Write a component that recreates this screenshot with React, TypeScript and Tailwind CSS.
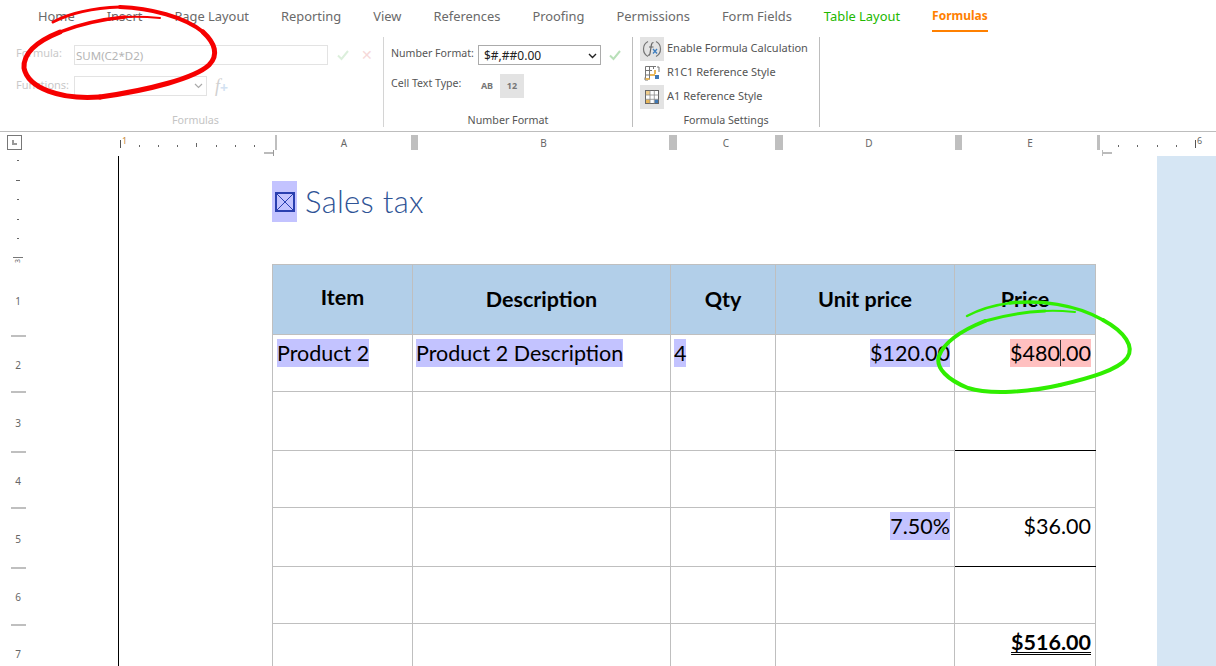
const tabs = ['Home', 'Insert', 'Page Layout', 'Reporting', 'View', 'References', 'Proofing', 'Permissions', 'Form Fields'];

function Mark({ children, red }: { children: React.ReactNode; red?: boolean }) {
  return <span className={`inline-block h-[28px] leading-[28px] ${red ? 'bg-[#ffc0c0]' : 'bg-[#c3c3ff]'}`}>{children}</span>;
}

function Check({ className }: { className: string }) {
  return (
    <svg width="12" height="12" viewBox="0 0 12 12" className={className}>
      <path d="M1 6.5 L4.5 10 L11 2" fill="none" stroke="currentColor" strokeWidth="2" />
    </svg>
  );
}

function FormulaIcon() {
  return (
    <svg width="22" height="22" viewBox="0 0 22 22">
      <path d="M7 3.5 A8.5 8.5 0 0 0 7 18.5 M15 3.5 A8.5 8.5 0 0 1 15 18.5" fill="none" stroke="#777" strokeWidth="1.2" />
      <path d="M12.5 4.5 C10.5 4.5 10.5 6 10.2 8 L9 15.5 C8.8 17 8 17.5 7 17" fill="none" stroke="#666" strokeWidth="1.2" />
      <path d="M8 9 H12.5" stroke="#666" strokeWidth="1" />
      <path d="M12 11 L16 15.5 M16 11 L12 15.5" stroke="#3f7fc0" strokeWidth="1.3" />
    </svg>
  );
}

function R1C1Icon() {
  return (
    <svg width="16" height="16" viewBox="0 0 16 16">
      <path d="M1.5 1.5 H12 M1.5 1.5 V14.5 M1.5 5.5 H8 M1.5 10 H5.5 M5.5 1.5 V14.5 M9.5 1.5 V4" fill="none" stroke="#777" />
      <path d="M13 2 H15 V7 M2 12.5 H1 V15 H4" fill="none" stroke="#777" />
      <rect x="6" y="9" width="5" height="2" fill="#e8b75a" />
      <rect x="10" y="5" width="2" height="4" fill="#e8b75a" />
      <rect x="11" y="10" width="4" height="4" fill="#3f78b5" />
      <rect x="1.5" y="13" width="4" height="2" fill="#e8b75a" />
    </svg>
  );
}

function A1Icon() {
  return (
    <svg width="14" height="14" viewBox="0 0 14 14">
      <rect x="0.5" y="0.5" width="13" height="13" fill="#fff" stroke="#666" />
      <rect x="1" y="1" width="4" height="4" fill="#f0cd8c" />
      <rect x="1" y="9.5" width="4" height="3.5" fill="#e8b75a" />
      <rect x="9.5" y="9.5" width="3.5" height="3.5" fill="#3f78b5" />
      <path d="M5 0.5 V13.5 M9.3 0.5 V13.5 M0.5 5 H13.5 M0.5 9.3 H13.5" stroke="#8a8a8a" strokeWidth="0.8" />
    </svg>
  );
}

function Ribbon() {
  return (
    <div className="h-[100px] flex pt-[5px] border-b border-[#bdbdbd] text-[11px] text-[#555]">
      <div className="w-[375px] ml-[9px] h-[90px] flex flex-col border-r border-[#d4d4d4] shrink-0">
        <div className="flex items-center h-[20px] mt-[8px] pl-[7px] text-[#c9c9c9]">
          <span className="w-[58px] pb-[3px]">Formula:</span>
          <div className="w-[254px] h-[20px] border border-[#e3e3e3] pl-[1px] pt-[1px] text-[11.5px] leading-[18px] text-[#b5b5b5]">SUM(C2*D2)</div>
          <Check className="ml-[9px] text-[#dcefdc]" />
          <span className="ml-[12px] text-[#f6d9d9] text-[14px] leading-none">✕</span>
        </div>
        <div className="flex items-center h-[20px] mt-[11px] pl-[7px] text-[#c9c9c9]">
          <span className="w-[58px] pb-[2px]">Functions:</span>
          <div className="w-[133px] h-[20px] border border-[#e3e3e3] flex items-center justify-end pr-[3px]">
            <svg width="9" height="6" viewBox="0 0 9 6"><path d="M1 1 L4.5 4.5 L8 1" fill="none" stroke="#aaa" strokeWidth="1.2" /></svg>
          </div>
          <span className="ml-[8px] font-['Liberation_Serif',serif] italic text-[18px] text-[#d0d0d0] leading-none">f</span>
          <span className="text-[#d3e2f2] text-[14px] leading-none font-bold mt-[3px]">+</span>
        </div>
        <div className="mt-auto -mb-[1px] text-center text-[#c4c4c4] text-[10.7px] pr-[1px]">Formulas</div>
      </div>

      <div className="w-[249px] h-[90px] flex flex-col border-r border-[#bdbdbd] pl-[7px] shrink-0">
        <div className="flex items-center h-[20px] mt-[8px]">
          <span className="w-[87px] pb-[2px] text-[10.6px] whitespace-nowrap">Number Format:</span>
          <div className="w-[123px] h-[20px] border border-[#ababab] flex items-center justify-between pl-[5px] pr-[3px] pt-[1px] text-[12px] text-[#222]">
            $#,##0.00
            <svg width="9" height="6" viewBox="0 0 9 6"><path d="M1 1 L4.5 4.5 L8 1" fill="none" stroke="#222" strokeWidth="1.4" /></svg>
          </div>
          <Check className="ml-[8px] text-[#b9e0b9]" />
        </div>
        <div className="flex items-center h-[24px] mt-[9px]">
          <span className="w-[83px] pb-[4px] text-[10.6px]">Cell Text Type:</span>
          <span className="w-[26px] text-center text-[9px] font-bold text-[#777]">AB</span>
          <span className="w-[24px] h-[24px] bg-[#e3e3e3] flex items-center justify-center text-[9px] font-bold text-[#777]">12</span>
        </div>
        <div className="mt-auto -mb-[1px] text-center text-[10.7px] pr-[7px]">Number Format</div>
      </div>

      <div className="w-[187px] h-[90px] flex flex-col border-r border-[#bdbdbd] pl-[7px] shrink-0">
        <div className="flex items-center h-[24px]">
          <span className="w-[24px] h-[24px] bg-[#e3e3e3] flex items-center justify-center"><FormulaIcon /></span>
          <span className="ml-[3px] pb-[2px] whitespace-nowrap">Enable Formula Calculation</span>
        </div>
        <div className="flex items-center h-[24px]">
          <span className="w-[24px] h-[24px] flex items-center justify-center"><R1C1Icon /></span>
          <span className="ml-[3px] pb-[2px] whitespace-nowrap">R1C1 Reference Style</span>
        </div>
        <div className="flex items-center h-[24px]">
          <span className="w-[24px] h-[24px] bg-[#e3e3e3] flex items-center justify-center"><A1Icon /></span>
          <span className="ml-[3px] pb-[2px] whitespace-nowrap">A1 Reference Style</span>
        </div>
        <div className="mt-auto -mb-[1px] text-center text-[10.7px] pr-[7px]">Formula Settings</div>
      </div>
    </div>
  );
}

function Ticks({ width, n, tall }: { width: number; n: number; tall: number }) {
  return (
    <div className="flex justify-between items-end h-[5px] mt-[7px]" style={{ width }}>
      {Array.from({ length: n }).map((_, i) => (
        <span key={i} className={`w-[1px] bg-[#666] ${i === tall ? 'h-[4px]' : 'h-[2px]'}`} />
      ))}
    </div>
  );
}

function Handle({ w }: { w: string }) {
  return <div className={`${w} h-[15px] bg-[#bfbfbf] shrink-0`} />;
}

function RulerTop() {
  return (
    <div className="h-[24px] relative flex items-start pt-[3px] text-[10px] text-[#666]">
      <div className="ml-[7px] w-[15px] h-[15px] border border-[#777] flex items-center justify-center shrink-0">
        <span className="w-[5px] h-[5px] border-l-2 border-b-2 border-[#999]" />
      </div>
      <div className="w-[98px] shrink-0" />
      <div className="w-[1px] h-[8px] mt-[5px] bg-[#555] shrink-0" />
      <span className="ml-[1px] w-[17px] -mt-[1px] text-[9px] text-[#c98a3c] shrink-0">1</span>
      <Ticks width={116} n={7} tall={3} />
      <div className="w-[20px] shrink-0" />
      <Handle w="w-[2px]" />
      <div className="w-[134px] text-center pt-[1px] shrink-0">A</div>
      <Handle w="w-[7px]" />
      <div className="w-[251px] text-center pt-[1px] shrink-0">B</div>
      <Handle w="w-[8px]" />
      <div className="w-[98px] text-center pt-[1px] shrink-0">C</div>
      <Handle w="w-[8px]" />
      <div className="w-[172px] text-center pt-[1px] shrink-0">D</div>
      <Handle w="w-[7px]" />
      <div className="w-[135px] text-center pl-[1px] pt-[1px] shrink-0">E</div>
      <Handle w="w-[3px]" />
      <div className="w-[18px] shrink-0" />
      <Ticks width={59} n={4} tall={-1} />
      <div className="w-[18px] shrink-0" />
      <div className="w-[1px] h-[8px] mt-[5px] bg-[#555] shrink-0" />
      <span className="ml-[1px] -mt-[1px] text-[9px]">6</span>
      {/* tab markers under the ruler */}
      <span className="absolute left-[264px] top-[20px] w-[10px] h-[2px] bg-[#bbb]" />
      <span className="absolute left-[273px] top-[18px] w-[1px] h-[6px] bg-[#999]" />
      <span className="absolute left-[1102px] top-[20px] w-[10px] h-[2px] bg-[#bbb]" />
      <span className="absolute left-[1102px] top-[18px] w-[1px] h-[6px] bg-[#bbb]" />
    </div>
  );
}

function RulerLeft() {
  const small = [0, 1, 2, 3, 4];
  const nums = [
    { n: '1', h: 'h-[75px]', mb: 'mb-[26px]' },
    { n: '2', h: 'h-[56px]', mb: 'mb-[18px]' },
    { n: '3', h: 'h-[60px]', mb: 'mb-[20px]' },
    { n: '4', h: 'h-[56px]', mb: 'mb-[18px]' },
    { n: '5', h: 'h-[60px]', mb: 'mb-[20px]' },
    { n: '6', h: 'h-[57px]', mb: 'mb-[19px]' },
  ];
  return (
    <div className="w-[118px] shrink-0 text-[10px] text-[#666]">
      <div className="w-[36px] flex flex-col items-center">
        {small.map((i) => (
          <div key={i} className="h-[19.4px] w-full flex items-end justify-center pb-[14px]">
            <span className={`h-[1px] bg-[#666] ${i === 1 ? 'w-[4px]' : 'w-[2px]'}`} />
          </div>
        ))}
        <div className="h-[6px] w-[10px] mt-[4px] border-t border-[#777] flex justify-center">
          <span className="-rotate-90 text-[7px] leading-[6px] h-[6px]">3</span>
        </div>
        {nums.map((r) => (
          <div key={r.n} className={`${r.h} w-full flex flex-col items-center justify-end`}>
            <span className={r.mb}>{r.n}</span>
            <span className="w-[15px] h-[2px] bg-[#bfbfbf] mb-[1px]" />
          </div>
        ))}
        <div className="mt-[20px]">7</div>
      </div>
    </div>
  );
}

function SalesTable() {
  const td = 'border border-[#bfbfbf] align-top px-[4px] pt-[4px] text-[21.5px] leading-[28px] text-black';
  const th = 'border border-[#bfbfbf] bg-[#b2cfe9] text-center font-bold text-[21.5px] text-black';
  const empty = (k: string, h: string, heavy?: boolean) => (
    <tr key={k} className={h}>
      <td className={td} /><td className={td} /><td className={td} /><td className={td} />
      <td className={`${td} ${heavy ? 'border-b-black' : ''}`} />
    </tr>
  );
  return (
    <table className="table-fixed border-collapse w-[823px]">
      <colgroup>
        <col className="w-[140px]" />
        <col className="w-[258px]" />
        <col className="w-[105px]" />
        <col className="w-[179px]" />
        <col className="w-[141px]" />
      </colgroup>
      <tbody>
        <tr className="h-[70px]">
          <th className={th}><span className="relative -top-[2px]">Item</span></th>
          <th className={th}>Description</th>
          <th className={th}>Qty</th>
          <th className={th}>Unit price</th>
          <th className={th}>Price</th>
        </tr>
        <tr className="h-[57px]">
          <td className={td}><Mark>Product 2</Mark></td>
          <td className={`${td} pl-[3px]`}><Mark>Product 2 Description</Mark></td>
          <td className={`${td} pl-[3px]`}><Mark>4</Mark></td>
          <td className={`${td} text-right`}><Mark>$120.00</Mark></td>
          <td className={`${td} text-right`}>
            <Mark red>$480<span className="border-l border-[#333]">.00</span></Mark>
          </td>
        </tr>
        {empty('r3', 'h-[59px]', true)}
        {empty('r4', 'h-[57px]')}
        <tr className="h-[59px]">
          <td className={td} /><td className={td} /><td className={td} />
          <td className={`${td} text-right`}><Mark>7.50%</Mark></td>
          <td className={`${td} text-right border-b-black`}>$36.00</td>
        </tr>
        {empty('r6', 'h-[57px]')}
        <tr className="h-[50px]">
          <td className={td} /><td className={td} /><td className={td} /><td className={td} />
          <td className={`${td} text-right font-bold`}>
            <span className="underline decoration-double decoration-1 underline-offset-2">$516.00</span>
          </td>
        </tr>
      </tbody>
    </table>
  );
}

export default function App() {
  return (
    <div className="relative w-[1216px] h-[666px] overflow-hidden bg-white font-['Noto_Sans',sans-serif]">
      <div className="h-[32px] flex items-start gap-[32px] pl-[38px] pt-[6px] text-[12.9px] leading-[20px] text-[#6a6a6a] whitespace-nowrap">
        {tabs.map((t) => <span key={t}>{t}</span>)}
        <span className="text-[#22b800]">Table Layout</span>
        <span className="font-bold text-[12px] text-[#ff8000] h-[26px] border-b-2 border-[#ff8000]">Formulas</span>
      </div>
      <Ribbon />
      <RulerTop />
      <div className="flex h-[510px]">
        <RulerLeft />
        <div className="flex-1 border-l border-black pl-[153px] font-['Lato',sans-serif] overflow-hidden">
          <div className="flex items-center h-[41px] mt-[25px] mb-[42px] text-[#2f5496]">
            <span className="w-[25px] h-[41px] bg-[#c3c3ff] flex items-center justify-center">
              <svg width="20" height="20" viewBox="0 0 20 20">
                <rect x="1" y="1" width="18" height="18" fill="none" stroke="#2a3fb0" strokeWidth="2" />
                <path d="M2 2 L18 18 M18 2 L2 18" stroke="#2a3fb0" strokeWidth="1" />
              </svg>
            </span>
            <span className="ml-[8px] text-[31px] font-light tracking-[0.3px] whitespace-nowrap">Sales tax</span>
          </div>
          <SalesTable />
        </div>
        <div className="w-[59px] bg-[#d6e6f4] shrink-0" />
      </div>
      {/* pen annotations drawn over the page, heavier through the middle of each stroke */}
      <svg className="absolute inset-0 pointer-events-none" width="1216" height="666" viewBox="0 0 1216 666" fill="none" strokeLinecap="round">
        <g stroke="#f60000">
          <path d="M53 22 C70 13 95 8 120 7" strokeWidth="3" />
          <path d="M120 7 C150 8 185 17 203 32" strokeWidth="4" />
          <path d="M203 32 C215 43 219 55 209 65 C195 78 150 90 100 97" strokeWidth="5" />
          <path d="M100 97 C60 100 28 88 24 68 C23 52 40 40 60 32" strokeWidth="5" />
          <path d="M60 32 C85 22 105 19 125 17" strokeWidth="3.5" />
          <path d="M125 17 C140 16 150 17 160 18" strokeWidth="2" />
        </g>
        <g stroke="#30ee00">
          <path d="M967 316 C980 309 995 305 1010 303" strokeWidth="2.5" />
          <path d="M1010 303 C1040 300 1075 304 1103 320" strokeWidth="3.5" />
          <path d="M1103 320 C1125 332 1135 347 1127 358 C1118 370 1090 378 1060 385" strokeWidth="4" />
          <path d="M1060 385 C1030 392 990 395 968 388 C948 380 935 368 939 356 C945 340 965 329 985 321" strokeWidth="4" />
          <path d="M985 321 C1005 315 1025 312 1045 311" strokeWidth="3" />
          <path d="M1045 311 C1055 310 1065 311 1075 312" strokeWidth="2" />
        </g>
      </svg>
    </div>
  );
}
